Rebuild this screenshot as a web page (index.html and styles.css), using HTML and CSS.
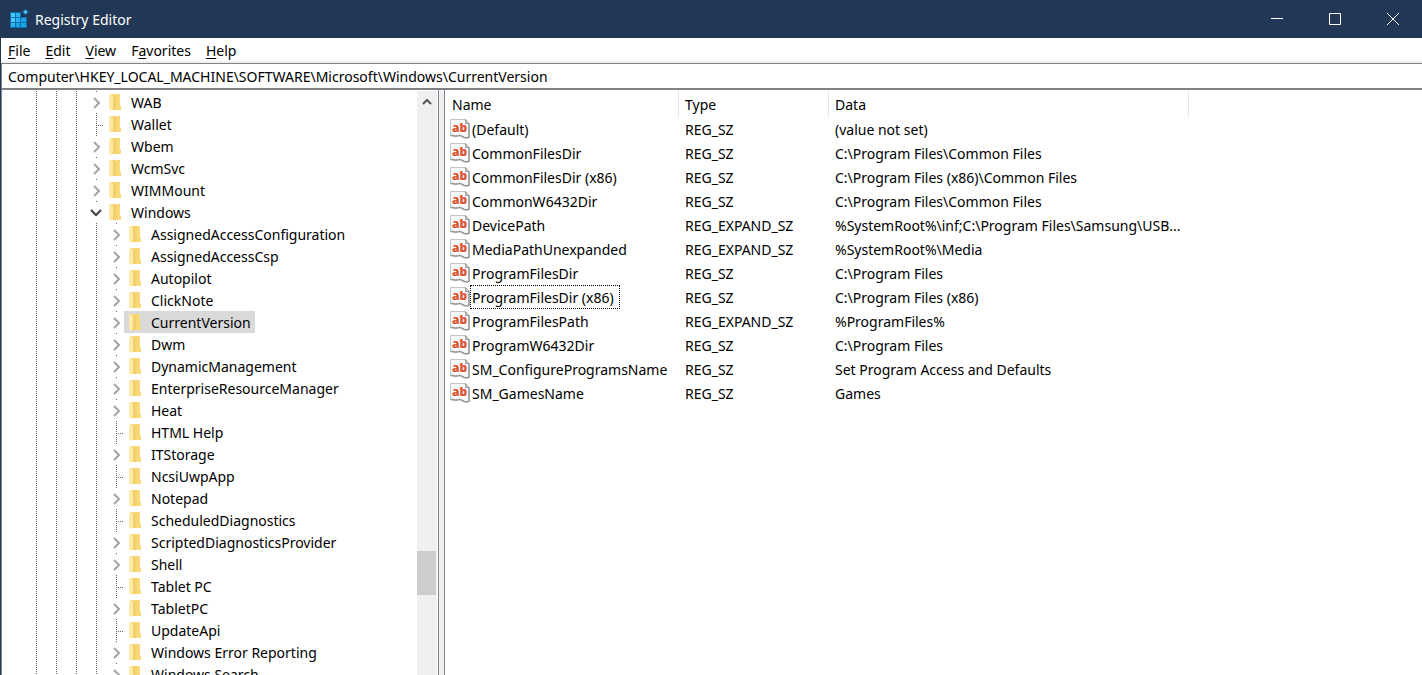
FILE: index.html
```
<!DOCTYPE html>
<html lang="en">
<head>
    <meta charset="UTF-8">
    <meta name="viewport" content="width=device-width, initial-scale=1.0">
    <title>Registry Editor</title>
    <link rel="stylesheet" href="styles.css">
</head>
<body>
    <!-- Shared icons -->
    <svg class="icon-defs" aria-hidden="true">
        <symbol id="folder" viewBox="0 0 12 17">
            <path fill="#f9d978" d="M2 0h9v11l1 1v4H3z"/>
            <path fill="#f3d06e" d="M4 1h4l-1 15H4z"/>
            <path fill="#ffe9a8" d="M0 0l4 2v12l-2 3-2-2z"/>
        </symbol>
        <symbol id="chevron" viewBox="0 0 8 12">
            <path fill="none" stroke="#a6a6a6" stroke-width="2" d="M2 1l5 5-5 5"/>
        </symbol>
        <symbol id="chevron-down" viewBox="0 0 12 8">
            <path fill="none" stroke="#404040" stroke-width="2" d="M1 1l5 5 5-5"/>
        </symbol>
        <symbol id="string" viewBox="0 0 20 20">
            <path fill="#fafafa" stroke="#c4c4c4" d="M.5 16.500V.5h14.500l4 4v14c-2 1-4 .5-6-1s-3-1.500-5-.5-4 1-7.500-.5z"/>
            <path fill="none" stroke="#999" stroke-width="1.500" d="M.5 16.500c2-.8 3 .6 5 .6s3-1 5-.4 3 2.100 5 2.100 2.500-.3 3.500-.5V5"/>
            <path fill="#ddd" stroke="#999" d="M15.500.5v4h3.500z"/>
            <text class="string-text" x="2" y="13">ab</text>
        </symbol>
    </svg>

    <div class="window">
        <header class="title-bar">
            <svg class="app-icon" viewBox="0 0 20 20" aria-hidden="true">
                <path fill="#0a6fb0" d="M1 3h11v5h6v11H1z"/>
                <path fill="#4cc9fb" d="M2 4h4v4H2zM2 9h4v4H2z"/>
                <path fill="#29b2ee" d="M7 4h4v4H7zM7 9h4v4H7zM2 14h4v4H2z"/>
                <path fill="#1ca3e2" d="M12 9h5v4h-5zM7 14h4v4H7zM12 14h5v4h-5z"/>
                <path fill="#1b8fce" d="M16.500 0l3 3-3 3-3-3z"/>
                <path fill="#6fd8ff" d="M16.500 1.500l1.500 1.500-1.500 1.500-1.500-1.500z"/>
            </svg>
            <h1>Registry Editor</h1>
            <div class="window-buttons">
                <button type="button" aria-label="Minimize"><svg viewBox="0 0 12 12"><path d="M0 5.500h12"/></svg></button>
                <button type="button" aria-label="Maximize"><svg viewBox="0 0 12 12"><path d="M.5.5h11v11H.5z"/></svg></button>
                <button type="button" aria-label="Close"><svg viewBox="0 0 12 12"><path d="M0 0l12 12M12 0L0 12"/></svg></button>
            </div>
        </header>

        <nav class="menu-bar">
            <button type="button"><u>F</u>ile</button>
            <button type="button"><u>E</u>dit</button>
            <button type="button"><u>V</u>iew</button>
            <button type="button">F<u>a</u>vorites</button>
            <button type="button"><u>H</u>elp</button>
        </nav>

        <input class="address" type="text" aria-label="Address" spellcheck="false" value="Computer\HKEY_LOCAL_MACHINE\SOFTWARE\Microsoft\Windows\CurrentVersion">

        <main>
            <section class="tree-pane">
                <ul class="tree">
                    <li><div class="row"><button type="button" class="toggle" aria-label="Expand WAB"><svg><use href="#chevron"/></svg></button><a href="#"><svg><use href="#folder"/></svg>WAB</a></div></li>
                    <li><div class="row"><span class="branch"></span><a href="#"><svg><use href="#folder"/></svg>Wallet</a></div></li>
                    <li><div class="row"><button type="button" class="toggle" aria-label="Expand Wbem"><svg><use href="#chevron"/></svg></button><a href="#"><svg><use href="#folder"/></svg>Wbem</a></div></li>
                    <li><div class="row"><button type="button" class="toggle" aria-label="Expand WcmSvc"><svg><use href="#chevron"/></svg></button><a href="#"><svg><use href="#folder"/></svg>WcmSvc</a></div></li>
                    <li><div class="row"><button type="button" class="toggle" aria-label="Expand WIMMount"><svg><use href="#chevron"/></svg></button><a href="#"><svg><use href="#folder"/></svg>WIMMount</a></div></li>
                    <li>
                        <div class="row"><button type="button" class="toggle open" aria-label="Collapse Windows"><svg><use href="#chevron-down"/></svg></button><a href="#"><svg><use href="#folder"/></svg>Windows</a></div>
                        <ul>
                            <li><div class="row"><button type="button" class="toggle" aria-label="Expand AssignedAccessConfiguration"><svg><use href="#chevron"/></svg></button><a href="#"><svg><use href="#folder"/></svg>AssignedAccessConfiguration</a></div></li>
                            <li><div class="row"><button type="button" class="toggle" aria-label="Expand AssignedAccessCsp"><svg><use href="#chevron"/></svg></button><a href="#"><svg><use href="#folder"/></svg>AssignedAccessCsp</a></div></li>
                            <li><div class="row"><button type="button" class="toggle" aria-label="Expand Autopilot"><svg><use href="#chevron"/></svg></button><a href="#"><svg><use href="#folder"/></svg>Autopilot</a></div></li>
                            <li><div class="row"><button type="button" class="toggle" aria-label="Expand ClickNote"><svg><use href="#chevron"/></svg></button><a href="#"><svg><use href="#folder"/></svg>ClickNote</a></div></li>
                            <li><div class="row"><button type="button" class="toggle" aria-label="Expand CurrentVersion"><svg><use href="#chevron"/></svg></button><a href="#" class="selected"><svg><use href="#folder"/></svg>CurrentVersion</a></div></li>
                            <li><div class="row"><button type="button" class="toggle" aria-label="Expand Dwm"><svg><use href="#chevron"/></svg></button><a href="#"><svg><use href="#folder"/></svg>Dwm</a></div></li>
                            <li><div class="row"><button type="button" class="toggle" aria-label="Expand DynamicManagement"><svg><use href="#chevron"/></svg></button><a href="#"><svg><use href="#folder"/></svg>DynamicManagement</a></div></li>
                            <li><div class="row"><button type="button" class="toggle" aria-label="Expand EnterpriseResourceManager"><svg><use href="#chevron"/></svg></button><a href="#"><svg><use href="#folder"/></svg>EnterpriseResourceManager</a></div></li>
                            <li><div class="row"><button type="button" class="toggle" aria-label="Expand Heat"><svg><use href="#chevron"/></svg></button><a href="#"><svg><use href="#folder"/></svg>Heat</a></div></li>
                            <li><div class="row"><span class="branch"></span><a href="#"><svg><use href="#folder"/></svg>HTML Help</a></div></li>
                            <li><div class="row"><button type="button" class="toggle" aria-label="Expand ITStorage"><svg><use href="#chevron"/></svg></button><a href="#"><svg><use href="#folder"/></svg>ITStorage</a></div></li>
                            <li><div class="row"><span class="branch"></span><a href="#"><svg><use href="#folder"/></svg>NcsiUwpApp</a></div></li>
                            <li><div class="row"><button type="button" class="toggle" aria-label="Expand Notepad"><svg><use href="#chevron"/></svg></button><a href="#"><svg><use href="#folder"/></svg>Notepad</a></div></li>
                            <li><div class="row"><span class="branch"></span><a href="#"><svg><use href="#folder"/></svg>ScheduledDiagnostics</a></div></li>
                            <li><div class="row"><button type="button" class="toggle" aria-label="Expand ScriptedDiagnosticsProvider"><svg><use href="#chevron"/></svg></button><a href="#"><svg><use href="#folder"/></svg>ScriptedDiagnosticsProvider</a></div></li>
                            <li><div class="row"><button type="button" class="toggle" aria-label="Expand Shell"><svg><use href="#chevron"/></svg></button><a href="#"><svg><use href="#folder"/></svg>Shell</a></div></li>
                            <li><div class="row"><span class="branch"></span><a href="#"><svg><use href="#folder"/></svg>Tablet PC</a></div></li>
                            <li><div class="row"><button type="button" class="toggle" aria-label="Expand TabletPC"><svg><use href="#chevron"/></svg></button><a href="#"><svg><use href="#folder"/></svg>TabletPC</a></div></li>
                            <li><div class="row"><span class="branch"></span><a href="#"><svg><use href="#folder"/></svg>UpdateApi</a></div></li>
                            <li><div class="row"><button type="button" class="toggle" aria-label="Expand Windows Error Reporting"><svg><use href="#chevron"/></svg></button><a href="#"><svg><use href="#folder"/></svg>Windows Error Reporting</a></div></li>
                            <li><div class="row"><button type="button" class="toggle" aria-label="Expand Windows Search"><svg><use href="#chevron"/></svg></button><a href="#"><svg><use href="#folder"/></svg>Windows Search</a></div></li>
                        </ul>
                    </li>
                </ul>
                <div class="scrollbar">
                    <button type="button" class="scroll-up" aria-label="Scroll up"><svg viewBox="0 0 10 7"><path d="M1 6l4-4 4 4"/></svg></button>
                    <div class="track"><div class="thumb"></div></div>
                </div>
            </section>

            <section class="list-pane">
                <table>
                    <thead>
                        <tr><th class="col-name">Name</th><th class="col-type">Type</th><th class="col-data">Data</th><th class="col-rest"></th></tr>
                    </thead>
                    <tbody>
                        <tr><td><div class="value"><svg><use href="#string"/></svg><span>(Default)</span></div></td><td>REG_SZ</td><td>(value not set)</td></tr>
                        <tr><td><div class="value"><svg><use href="#string"/></svg><span>CommonFilesDir</span></div></td><td>REG_SZ</td><td>C:\Program Files\Common Files</td></tr>
                        <tr><td><div class="value"><svg><use href="#string"/></svg><span>CommonFilesDir (x86)</span></div></td><td>REG_SZ</td><td>C:\Program Files (x86)\Common Files</td></tr>
                        <tr><td><div class="value"><svg><use href="#string"/></svg><span>CommonW6432Dir</span></div></td><td>REG_SZ</td><td>C:\Program Files\Common Files</td></tr>
                        <tr><td><div class="value"><svg><use href="#string"/></svg><span>DevicePath</span></div></td><td>REG_EXPAND_SZ</td><td>%SystemRoot%\inf;C:\Program Files\Samsung\USB...</td></tr>
                        <tr><td><div class="value"><svg><use href="#string"/></svg><span>MediaPathUnexpanded</span></div></td><td>REG_EXPAND_SZ</td><td>%SystemRoot%\Media</td></tr>
                        <tr><td><div class="value"><svg><use href="#string"/></svg><span>ProgramFilesDir</span></div></td><td>REG_SZ</td><td>C:\Program Files</td></tr>
                        <tr><td><div class="value"><svg><use href="#string"/></svg><span class="focused">ProgramFilesDir (x86)</span></div></td><td>REG_SZ</td><td>C:\Program Files (x86)</td></tr>
                        <tr><td><div class="value"><svg><use href="#string"/></svg><span>ProgramFilesPath</span></div></td><td>REG_EXPAND_SZ</td><td>%ProgramFiles%</td></tr>
                        <tr><td><div class="value"><svg><use href="#string"/></svg><span>ProgramW6432Dir</span></div></td><td>REG_SZ</td><td>C:\Program Files</td></tr>
                        <tr><td><div class="value"><svg><use href="#string"/></svg><span>SM_ConfigureProgramsName</span></div></td><td>REG_SZ</td><td>Set Program Access and Defaults</td></tr>
                        <tr><td><div class="value"><svg><use href="#string"/></svg><span>SM_GamesName</span></div></td><td>REG_SZ</td><td>Games</td></tr>
                    </tbody>
                </table>
            </section>
        </main>
    </div>
</body>
</html>
```
FILE: styles.css
```
* {
    box-sizing: border-box;
}
body {
    margin: 0;
    font-family: "Noto Sans", "Open Sans", sans-serif;
    font-size: 14px;
    line-height: 22px;
    color: #000;
    background-color: #fff;
}
button,
input {
    font: inherit;
    color: inherit;
}
button {
    padding: 0;
    border: none;
    background: none;
}
.icon-defs {
    display: none;
}
.window {
    display: flex;
    flex-direction: column;
    height: 100vh;
    overflow: hidden;
    border-left: 1px solid #223755;
}

/* Title bar */
.title-bar {
    display: flex;
    align-items: center;
    height: 38px;
    flex: none;
    padding-left: 8px;
    background-color: #223755;
    color: #fff;
}
.app-icon {
    width: 20px;
    height: 20px;
}
.title-bar h1 {
    margin: 0 0 0 6px;
    padding-top: 2px;
    font-size: 14px;
    font-weight: normal;
}
.window-buttons {
    display: flex;
    height: 100%;
    margin-left: auto;
}
.window-buttons button {
    display: flex;
    align-items: center;
    justify-content: center;
    width: 58px;
}
.window-buttons svg {
    width: 12px;
    height: 12px;
    fill: none;
    stroke: #fff;
}

/* Menu */
.menu-bar {
    display: flex;
    flex: none;
    gap: 15px;
    height: 25px;
    padding: 2px 7px 0;
    border-bottom: 2px solid #f0f0f0;
}
.menu-bar u {
    text-underline-offset: 2px;
}

.address {
    flex: none;
    height: 27px;
    padding: 0 6px;
    border: 1px solid #828087;
    border-right: none;
    border-bottom-width: 2px;
    border-radius: 0;
    outline: none;
}

main {
    display: flex;
    flex: 1;
    min-height: 0;
    background-color: #f0f0f0;
}

/* Key tree */
.tree-pane {
    display: flex;
    width: 438px;
    flex: none;
    padding: 1px 1px 0 0;
    border: 1px solid #828790;
    border-width: 0 1px;
    background-color: #fff;
    margin-right: 5px;
}
.tree,
.tree ul {
    margin: 0;
    padding: 0;
    list-style: none;
}
.tree {
    flex: 1;
    padding-left: 86px;
    /* dotted ancestor lines, masked into dots by the white stripes on top */
    background:
        repeating-linear-gradient(transparent 0 1px, #fff 1px 2px),
        linear-gradient(#666, #666) 34px 0 / 1px 100% no-repeat,
        linear-gradient(#666, #666) 54px 0 / 1px 100% no-repeat,
        linear-gradient(#666, #666) 74px 0 / 1px 100% no-repeat;
}
.tree ul {
    padding-left: 20px;
    background: repeating-linear-gradient(#666 0 1px, #fff 1px 2px) 8px 0 / 1px 100% no-repeat;
}
.row {
    display: flex;
    height: 22px;
    background: repeating-linear-gradient(#666 0 1px, #fff 1px 2px) 8px 0 / 1px 100% no-repeat;
}
.toggle {
    display: flex;
    align-items: center;
    justify-content: center;
    width: 16px;
    height: 20px;
    margin-top: 1px;
    padding-top: 2px;
    background-color: #fff;
}
.toggle svg {
    width: 8px;
    height: 12px;
}
.toggle.open svg {
    width: 12px;
    height: 8px;
}
.branch {
    width: 16px;
    background: repeating-linear-gradient(to right, #666 0 1px, #fff 1px 2px) 10px 12px / 6px 1px no-repeat;
}
.row a {
    display: flex;
    gap: 10px;
    padding: 0 4px 0 5px;
    line-height: 24px;
    color: inherit;
    text-decoration: none;
    white-space: nowrap;
}
.row a svg {
    width: 12px;
    height: 17px;
    margin-top: 3px;
}
.row a.selected {
    background-color: #d9d9d9;
}

/* Scrollbar */
.scrollbar {
    display: flex;
    flex-direction: column;
    width: 20px;
    flex: none;
    background-color: #f0f0f0;
}
.scroll-up {
    display: flex;
    align-items: center;
    justify-content: center;
    height: 20px;
}
.scroll-up svg {
    width: 10px;
    height: 7px;
    fill: none;
    stroke: #555;
    stroke-width: 2;
}
.track {
    display: flex;
    flex-direction: column;
    flex: 1;
    padding-right: 1px;
}
.track::before {
    content: "";
    flex: 11;
}
.track::after {
    content: "";
    flex: 2;
}
.thumb {
    height: 44px;
    background-color: #cdcdcd;
}

/* Values */
.list-pane {
    flex: 1;
    min-width: 0;
    padding-top: 1px;
    border-left: 1px solid #828790;
    background-color: #fff;
}
table {
    width: 100%;
    border-collapse: separate;
    border-spacing: 0;
    table-layout: fixed;
}
th,
td {
    padding: 2px 6px 0;
    text-align: left;
    white-space: nowrap;
}
th {
    height: 26px;
    border-right: 1px solid #e5e5e5;
    font-weight: normal;
}
td {
    height: 24px;
}
.col-name {
    width: 234px;
    padding-left: 7px;
}
.col-type {
    width: 150px;
}
.col-data {
    width: 360px;
}
.col-rest {
    border-right: none;
}
td:first-child {
    padding: 0 0 0 5px;
}
.value {
    display: flex;
    align-items: center;
    height: 24px;
}
.value svg {
    width: 20px;
    height: 20px;
    flex: none;
}
.value span {
    height: 24px;
    padding-right: 5px;
    padding-left: 1px;
    border: 1px solid transparent;
    line-height: 24px;
}
.value .focused {
    border: 1px dotted #000;
}
.string-text {
    font-family: "Open Sans", "Noto Sans", sans-serif;
    font-size: 12px;
    font-weight: 800;
    fill: #dd5533;
}
```
